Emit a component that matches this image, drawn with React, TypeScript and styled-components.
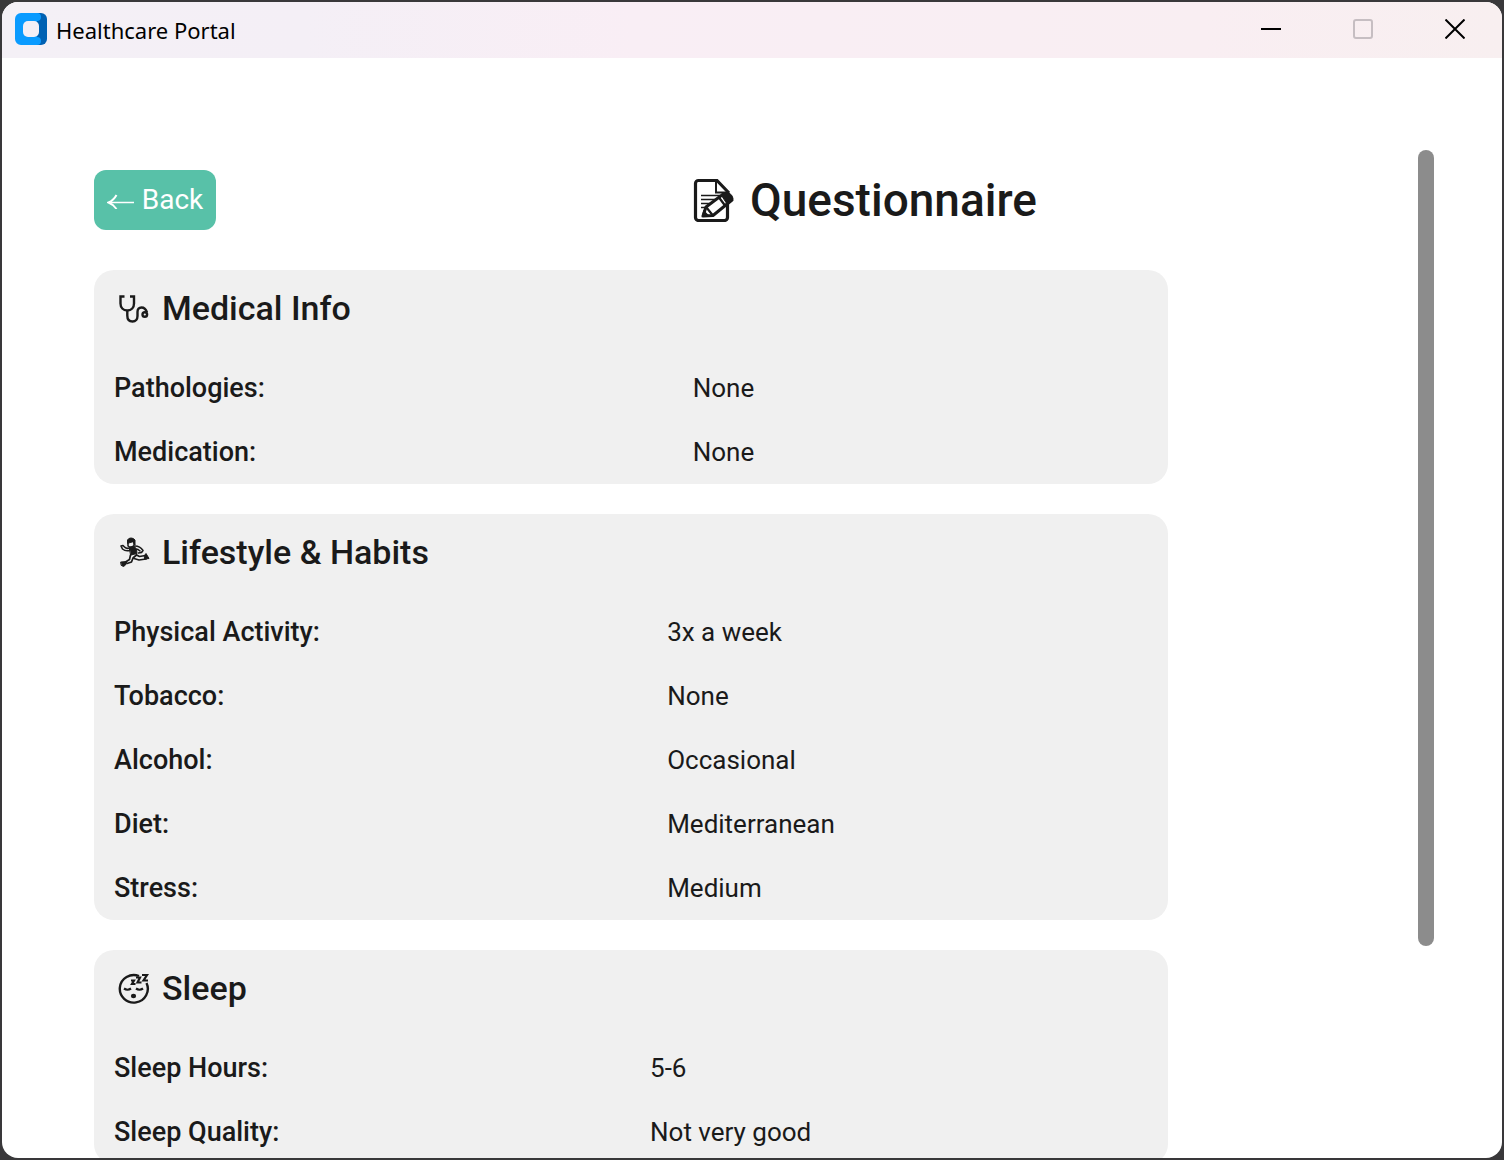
import React from "react";
import styled, { createGlobalStyle } from "styled-components";

const GlobalStyle = createGlobalStyle`
  * { box-sizing: border-box; }
  body {
    margin: 0;
    background: #39383a;
    color: #1a1a1a;
    font-family: Roboto, "Liberation Sans", sans-serif;
  }
`;

const Desktop = styled.div`
  height: 100vh;
  padding: 2px;
`;

const Window = styled.div`
  display: flex;
  flex-direction: column;
  height: 100%;
  overflow: hidden;
  border-radius: 16px;
  background: #ffffff;
`;

const TitleBar = styled.header`
  display: flex;
  align-items: center;
  flex: none;
  height: 56px;
  padding: 0 1px 2px 13px;
  background: linear-gradient(90deg, #f4f0f6 0%, #f4eff6 20%, #f9eef5 42%, #f9eef2 80%, #f8eff0 100%);
`;

const AppName = styled.span`
  flex: 1;
  padding: 2px 0 0 9px;
  color: #000000;
  font: 400 22px/32px "Noto Sans", "Open Sans", sans-serif;
`;

const WindowButton = styled.button`
  display: grid;
  place-items: center;
  width: 92px;
  height: 54px;
  padding: 0;
  border: 0;
  background: none;
  color: #000000;

  &:disabled {
    color: #c6bec2;
  }
`;

const Body = styled.div`
  display: flex;
  flex: 1;
  min-height: 0;
  padding: 92px 68px 0 92px;
`;

const Content = styled.main`
  flex: 1;
  margin-right: 250px;
  padding-top: 20px;
  overflow-y: auto;
  scrollbar-width: none;
`;

const Track = styled.div`
  display: grid;
  grid-template-rows: 79fr 21fr;
  flex: none;
  width: 16px;
`;

const Thumb = styled.div`
  border-radius: 8px;
  background: #8c8c8c;
`;

const PageHeader = styled.div`
  display: grid;
  grid-template-columns: auto auto;
  column-gap: 84px;
  align-items: center;
  height: 60px;
  margin-bottom: 40px;
`;

const BackButton = styled.button`
  display: flex;
  align-items: center;
  justify-content: center;
  justify-self: start;
  gap: 8px;
  width: 122px;
  height: 60px;
  padding: 0;
  border: 0;
  border-radius: 12px;
  background: #58c1a8;
  color: #ffffff;
  font: 400 28px/32px Roboto, sans-serif;
`;

const PageTitle = styled.h1`
  display: flex;
  align-items: center;
  justify-content: center;
  gap: 16px;
  margin: 0;
  font-size: 46px;
  font-weight: 500;
  line-height: 60px;
`;

const Card = styled.section`
  margin-bottom: 30px;
  padding: 10px 20px 0;
  border-radius: 20px;
  background: #f0f0f0;
`;

const CardTitle = styled.h2`
  display: flex;
  align-items: center;
  gap: 10px;
  height: 56px;
  margin: 0 0 20px;
  padding-left: 2px;
  font-size: 34px;
  font-weight: 500;
`;

const Answers = styled.dl`
  display: grid;
  grid-template-columns: auto auto;
  column-gap: 34px;
  margin: 0;
  font-size: 26px;
  line-height: 64px;
`;

const Question = styled.dt`
  font-size: 27px;
  font-weight: 500;
`;

const Answer = styled.dd`
  margin: 0;
`;

const AppLogo = () => (
  <svg width="32" height="32" viewBox="0 0 32 32" aria-hidden="true">
    <rect x="10" width="22" height="32" rx="6" fill="#0061b3" />
    <path d="M6 0h16a4 4 0 0 1 4 4a4 4 0 0 1-4 4v16a4 4 0 0 1 4 4a4 4 0 0 1-4 4H6a6 6 0 0 1-6-6V6a6 6 0 0 1 6-6z" fill="#0a9bff" />
    <rect x="8" y="8" width="16" height="16" rx="5" fill="#f4eff6" />
  </svg>
);

const BackArrow = () => (
  <svg width="27" height="18" viewBox="0 0 27 18" fill="none" stroke="currentColor" aria-hidden="true">
    <path d="M2 11.500h25" strokeWidth="1.500" />
    <path d="M9.500 4Q6.500 9.500 1.500 11.500Q6.500 13.500 9.500 18" strokeWidth="2" />
  </svg>
);

const MemoIcon = () => (
  <svg width="41" height="44" viewBox="0 -2 41 44" fill="none" stroke="currentColor" aria-hidden="true">
    <path d="M34.500 24v13.500a3 3 0 0 1-3 3h-26a3 3 0 0 1-3-3v-34a3 3 0 0 1 3-3H24L36 13" strokeWidth="3.200" />
    <path d="M23 1v11.500h11" strokeWidth="2" />
    <path d="M8 15.500h19M8 19.500h16M8 23.500h12M8 27.500h6" strokeWidth="1.600" />
    <path d="M10 36l3-9L31 13.500l8 6.500L20 35.500z" fill="#ffffff" strokeWidth="3" strokeLinejoin="round" />
    <path d="M28.500 15.500l4-3q3-1 6 2.500t0 6l-4.500 3z" fill="currentColor" />
    <path d="M13.500 27.500l6 7.500M10 36l1-4 3.500 3.500zM26 17.500l6 8" strokeWidth="2.200" />
  </svg>
);

const StethoscopeIcon = () => (
  <svg width="36" height="32" viewBox="0 0 36 32" fill="none" stroke="currentColor" strokeWidth="2.400" aria-hidden="true">
    <path d="M8.500 4.500H4.500v7c0 4 2.600 7 6.800 7s6.700-3 6.700-7v-7h-4" />
    <path d="M11.300 19v4.500c0 4 2 6 5.200 6s5-2.500 5-5.500v-4c0-3 1.500-4.500 4-4.500s4.500 2 5.500 5" />
    <circle cx="28.800" cy="22.500" r="2.300" />
  </svg>
);

const RunnerIcon = () => (
  <svg width="36" height="32" viewBox="0 0 36 32" fill="none" stroke="currentColor" strokeLinecap="round" strokeLinejoin="round" aria-hidden="true">
    <path d="M12 6v4q3 2.500 6-.5V6" strokeWidth="1.500" />
    <path d="M11.500 7V4q1-2 3.500-2t4 2v5l-2-3z" fill="currentColor" />
    <path d="M13.500 11.500l5-1 2 3 .5 4-6 1.500z" fill="currentColor" />
    <path d="M13.500 12q-3 1-5-1l-1.500-1.500-2 .5 1.500 3q3 2.500 7 1.500" strokeWidth="1.600" />
    <path d="M19 10q5 0 8 4.500l-1.500 2-3 .5M20 13q2 0 4 2" strokeWidth="1.600" />
    <path d="M14.500 19l-1 4.500-4 2.500M20.500 19l-3.500 3-1.500 4-4.500 1.500" strokeWidth="1.700" />
    <path d="M20.500 19l3 1.500 6-1M18 22.500l5 1.500 7-1" strokeWidth="1.700" />
    <path d="M5 26l6-.5-1.500 3.500-2 1.500-2-1z" fill="currentColor" strokeWidth="1" />
    <path d="M28.500 19.500l1.500-2 3 5-4 .5z" fill="currentColor" strokeWidth="1" />
  </svg>
);

const SleepingIcon = () => (
  <svg width="36" height="32" viewBox="0 0 36 32" fill="none" stroke="currentColor" aria-hidden="true">
    <path d="M23 4A14 13.800 0 1 0 30.500 11" strokeWidth="2.400" />
    <path d="M8 16.500q3.500 2.500 7 0M20 16.500q3.500 2.500 7 0" strokeWidth="2.200" />
    <ellipse cx="17.500" cy="24" rx="2.600" ry="2.200" fill="currentColor" stroke="none" />
    <path d="M15 8.500h3l-2 3.500h3.500M20 5.500h4l-2.500 5h4M26 3h5l-3.500 5.500H32" strokeWidth="2.200" />
  </svg>
);

const sections = [
  {
    title: "Medical Info",
    icon: <StethoscopeIcon />,
    answers: [
      ["Pathologies:", "None"],
      ["Medication:", "None"],
    ],
  },
  {
    title: "Lifestyle & Habits",
    icon: <RunnerIcon />,
    answers: [
      ["Physical Activity:", "3x a week"],
      ["Tobacco:", "None"],
      ["Alcohol:", "Occasional"],
      ["Diet:", "Mediterranean"],
      ["Stress:", "Medium"],
    ],
  },
  {
    title: "Sleep",
    icon: <SleepingIcon />,
    answers: [
      ["Sleep Hours:", "5-6"],
      ["Sleep Quality:", "Not very good"],
    ],
  },
];

export default function App() {
  return (
    <Desktop>
      <GlobalStyle />
      <Window>
        <TitleBar>
          <AppLogo />
          <AppName>Healthcare Portal</AppName>
          <WindowButton aria-label="Minimize">
            <svg width="20" height="20" viewBox="0 0 20 20" stroke="currentColor" strokeWidth="2">
              <path d="M0 10h20" />
            </svg>
          </WindowButton>
          <WindowButton aria-label="Maximize" disabled>
            <svg width="20" height="20" viewBox="0 0 20 20" fill="none" stroke="currentColor" strokeWidth="2">
              <rect x="1" y="1" width="18" height="18" rx="2" />
            </svg>
          </WindowButton>
          <WindowButton aria-label="Close">
            <svg width="20" height="20" viewBox="0 0 20 20" stroke="currentColor" strokeWidth="2">
              <path d="M.5.5l19 19M19.500.5l-19 19" />
            </svg>
          </WindowButton>
        </TitleBar>
        <Body>
          <Content>
            <PageHeader>
              <BackButton>
                <BackArrow />
                Back
              </BackButton>
              <PageTitle>
                <MemoIcon />
                Questionnaire
              </PageTitle>
            </PageHeader>
            {sections.map((section) => (
              <Card key={section.title}>
                <CardTitle>
                  {section.icon}
                  {section.title}
                </CardTitle>
                <Answers>
                  {section.answers.map(([question, answer]) => (
                    <React.Fragment key={question}>
                      <Question>{question}</Question>
                      <Answer>{answer}</Answer>
                    </React.Fragment>
                  ))}
                </Answers>
              </Card>
            ))}
          </Content>
          <Track aria-hidden="true">
            <Thumb />
          </Track>
        </Body>
      </Window>
    </Desktop>
  );
}
